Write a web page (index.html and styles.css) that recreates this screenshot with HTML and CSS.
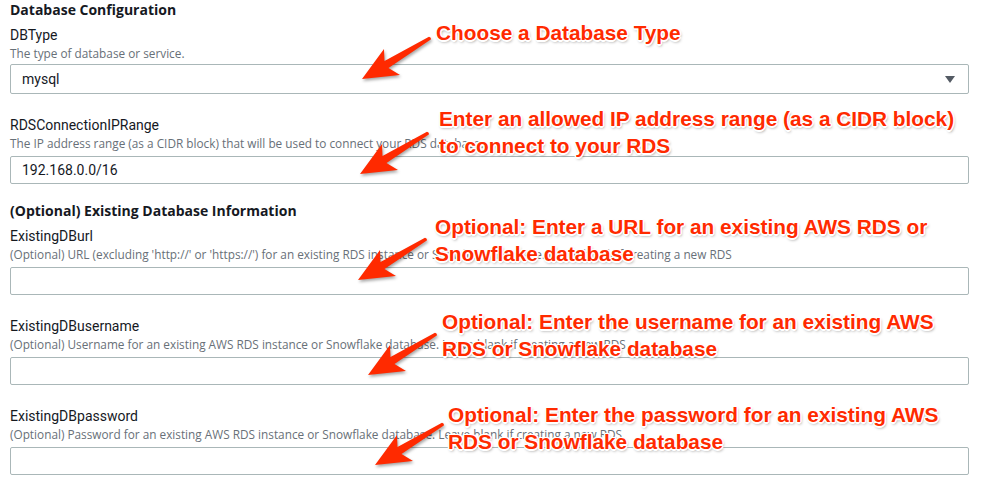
FILE: index.html
```html
<!DOCTYPE html>
<html lang="en">
<head>
    <meta charset="UTF-8">
    <meta name="viewport" content="width=device-width, initial-scale=1.0">
    <title>Database Configuration</title>
    <link rel="stylesheet" href="styles.css">
</head>
<body>
    <div class="page">
        <section class="group">
            <h2 class="group-title">Database Configuration</h2>

            <div class="field">
                <div class="field-label">DBType</div>
                <div class="field-desc">The type of database or service.</div>
                <div class="select">
                    <span>mysql</span>
                    <svg class="caret" width="10" height="7" viewBox="0 0 10 7"><path d="M0 0 H10 L5 7 Z" fill="#545b64"/></svg>
                </div>
            </div>

            <div class="field">
                <div class="field-label">RDSConnectionIPRange</div>
                <div class="field-desc">The IP address range (as a CIDR block) that will be used to connect your RDS database.</div>
                <input class="text-input" type="text" value="192.168.0.0/16">
            </div>
        </section>

        <section class="group">
            <h2 class="group-title">(Optional) Existing Database Information</h2>

            <div class="field">
                <div class="field-label">ExistingDBurl</div>
                <div class="field-desc">(Optional) URL (excluding 'http://' or 'https://') for an existing RDS instance or Snowflake database. Leave blank if creating a new RDS</div>
                <input class="text-input" type="text" value="">
            </div>

            <div class="field">
                <div class="field-label">ExistingDBusername</div>
                <div class="field-desc">(Optional) Username for an existing AWS RDS instance or Snowflake database. Leave blank if creating a new RDS</div>
                <input class="text-input" type="text" value="">
            </div>

            <div class="field">
                <div class="field-label">ExistingDBpassword</div>
                <div class="field-desc">(Optional) Password for an existing AWS RDS instance or Snowflake database. Leave blank if creating a new RDS</div>
                <input class="text-input" type="password" value="">
            </div>
        </section>

        <!-- annotations drawn over the form -->
        <div class="note note-type">Choose a Database Type</div>
        <div class="note note-ip">Enter an allowed IP address range (as a CIDR block)<br>to connect to your RDS</div>
        <div class="note note-url">Optional: Enter a URL for an existing AWS RDS or<br>Snowflake database</div>
        <div class="note note-user">Optional: Enter the username for an existing AWS<br>RDS or Snowflake database</div>
        <div class="note note-pass">Optional: Enter the password for an existing AWS<br>RDS or Snowflake database</div>

        <svg class="arrow arrow-type" width="80" height="52" viewBox="-4 -4 80 52"><path d="M0 41 L22 11 L22.5 23 L67 -1.2 Q69.5 -0.5 68.8 1.6 L26.5 30 L38 37 Z"/></svg>
        <svg class="arrow arrow-ip" width="80" height="52" viewBox="-4 -4 80 52"><path d="M0 41 L22 11 L22.5 23 L67 -1.2 Q69.5 -0.5 68.8 1.6 L26.5 30 L38 37 Z"/></svg>
        <svg class="arrow arrow-url" width="80" height="52" viewBox="-4 -4 80 52"><path d="M0 41 L22 11 L22.5 23 L67 -1.2 Q69.5 -0.5 68.8 1.6 L26.5 30 L38 37 Z"/></svg>
        <svg class="arrow arrow-user" width="80" height="52" viewBox="-4 -4 80 52"><path d="M0 41 L22 11 L22.5 23 L67 -1.2 Q69.5 -0.5 68.8 1.6 L26.5 30 L38 37 Z"/></svg>
        <svg class="arrow arrow-pass" width="80" height="52" viewBox="-4 -4 80 52"><path d="M0 41 L22 11 L22.5 23 L67 -1.2 Q69.5 -0.5 68.8 1.6 L26.5 30 L38 37 Z"/></svg>
    </div>
</body>
</html>
```

FILE: styles.css
```css
body {
    margin: 0;
    background: #fff;
    font-family: Roboto, "Liberation Sans", sans-serif;
    color: #16191f;
}

.page {
    position: relative;
    width: 959px;
    padding: 0 0 0 10px;
}

.group + .group {
    margin-top: 17px;
}

.group-title {
    margin: 0 0 5px;
    font-family: "Open Sans", Roboto, sans-serif;
    font-size: 14px;
    line-height: 20px;
    font-weight: 700;
}

.field + .field {
    margin-top: 21px;
}

.field-label {
    font-size: 14px;
    line-height: 20px;
}

.field-desc {
    font-family: "Open Sans", Roboto, sans-serif;
    font-size: 11.8px;
    line-height: 16px;
    color: #687078;
    white-space: nowrap;
}

.select {
    box-sizing: border-box;
    display: flex;
    align-items: center;
    justify-content: space-between;
    height: 30px;
    margin-top: 3px;
    padding: 0 13px 0 11px;
    border: 1px solid #aab7b8;
    border-radius: 2px;
    font-size: 14px;
}

.text-input {
    display: block;
    box-sizing: border-box;
    width: 100%;
    height: 28px;
    margin: 5px 0 0;
    padding: 0 11px;
    border: 1px solid #aab7b8;
    border-radius: 2px;
    font-family: inherit;
    font-size: 14px;
    color: #16191f;
    outline: none;
}

/* annotations */
.note {
    position: absolute;
    font-family: "Liberation Sans", Arial, sans-serif;
    font-weight: 700;
    font-size: 20.8px;
    line-height: 27px;
    color: #ff2a00;
    white-space: nowrap;
    text-shadow:
        -1px -1px 0 #fff, 1px -1px 0 #fff, -1px 1px 0 #fff, 1px 1px 0 #fff,
        0 -1.5px 0 #fff, 0 1.5px 0 #fff, -1.5px 0 0 #fff, 1.5px 0 0 #fff,
        1px 2px 3px rgba(0, 0, 0, 0.45);
}

.note-type { left: 436px; top: 19px; }
.note-ip { left: 439px; top: 105px; }
.note-url { left: 435px; top: 213px; }
.note-user { left: 442px; top: 308px; }
.note-pass { left: 448px; top: 401px; }

.arrow {
    position: absolute;
    fill: #ff2a00;
    filter: drop-shadow(1px 2px 1.5px rgba(0, 0, 0, 0.35));
}

.arrow-type { left: 358px; top: 34px; }
.arrow-ip { left: 356px; top: 129px; }
.arrow-url { left: 354px; top: 235px; }
.arrow-user { left: 364px; top: 330px; }
.arrow-pass { left: 371px; top: 420px; }
```
